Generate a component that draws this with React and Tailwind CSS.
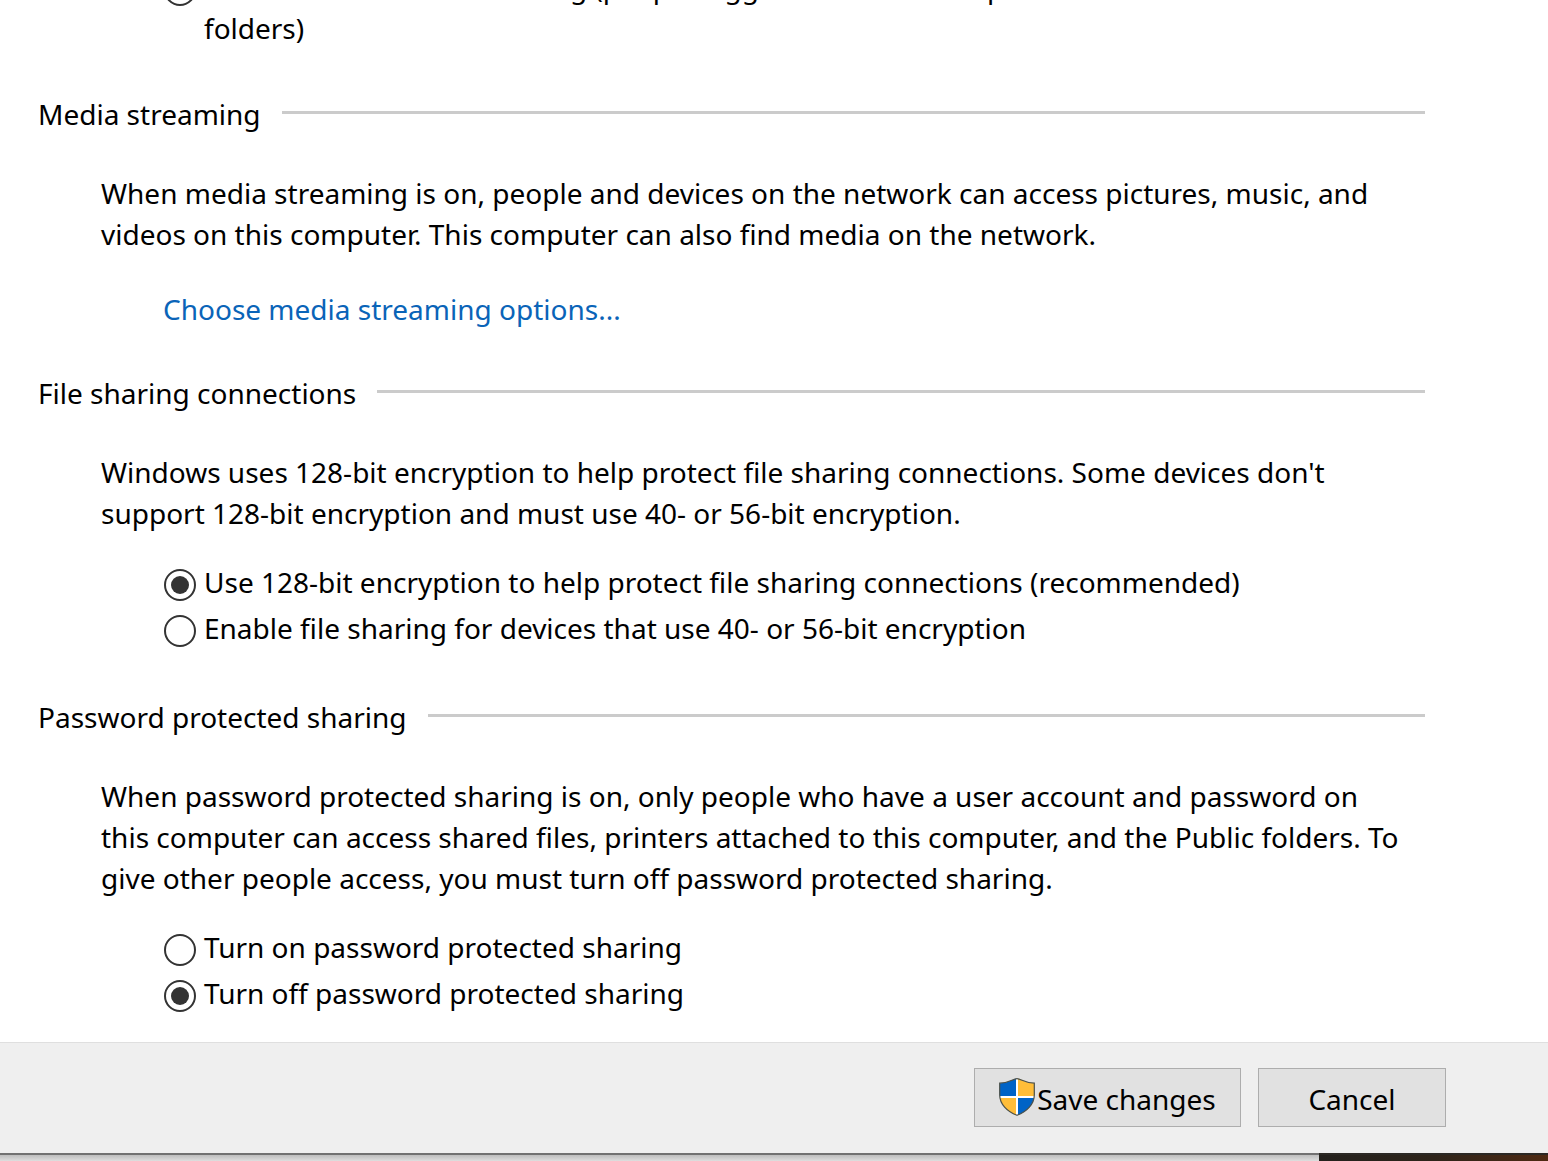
import { useState } from "react";

const Section = ({ title, children }) => (
  <section>
    <div className="flex items-center gap-[21px]">
      <h2 className="whitespace-nowrap">{title}</h2>
      <div className="mb-1 h-[3px] flex-1 bg-[#cbcbcb]" />
    </div>
    {children}
  </section>
);

const Radio = ({ name, checked, onChange, children }) => (
  <label className="flex items-start gap-2 whitespace-nowrap">
    <input
      type="radio"
      name={name}
      checked={checked}
      onChange={onChange}
      className="mt-[7px] grid size-8 shrink-0 appearance-none place-content-center rounded-full border-2 border-[#333333] bg-white before:size-[18px] before:rounded-full checked:before:bg-[#333333]"
    />
    <span>{children}</span>
  </label>
);

const ShieldIcon = () => (
  <svg viewBox="0 0 36 38" className="mb-0.5 h-[38px] w-9 shrink-0" aria-hidden="true">
    <defs>
      <clipPath id="shield">
        <path d="M18 .5C14 .5 10 5.200 .7 5.200V17C.7 26 8 33.500 18 37.500C28 33.500 35.300 26 35.300 17V5.200C26 5.200 22 .5 18 .5Z" />
      </clipPath>
    </defs>
    <g clipPath="url(#shield)">
      <path fill="#0063c6" d="M0 0h18v19H0zM18 19h18v19H18z" />
      <path fill="#ffbd38" d="M18 0h18v19H18zM0 19h18v19H0z" />
      <path fill="#fff" d="M17 0h2v38h-2zM0 18h36v2H0z" />
    </g>
    <path
      fill="none"
      stroke="#4b5049"
      strokeWidth="1.2"
      d="M18 .7C14 .7 10 5.200 .7 5.200V17C.7 26 8 33.500 18 37.300C28 33.500 35.300 26 35.300 17V5.200C26 5.200 22 .7 18 .7Z"
    />
  </svg>
);

const App = () => {
  const [publicSharing, setPublicSharing] = useState("on");
  const [encryption, setEncryption] = useState("128");
  const [password, setPassword] = useState("off");

  return (
    <div className="overflow-hidden bg-white font-['Noto_Sans','Open_Sans',sans-serif] text-[28px] leading-[41px] text-black">
      <main className="-mt-[33px] pr-[123px] pb-7 pl-[38px]">
        {/* Public folder sharing, scrolled mostly out of view */}
        <div className="pl-[126px]">
          <Radio
            name="public"
            checked={publicSharing === "off"}
            onChange={() => setPublicSharing("off")}
          >
            Turn off Public folder sharing (people logged on to this computer can still access these
            <br />
            folders)
          </Radio>
        </div>

        <div className="mt-[45px] flex flex-col gap-[43px]">
          <Section title="Media streaming">
            <p className="mt-[38px] pl-[63px] whitespace-nowrap">
              When media streaming is on, people and devices on the network can access pictures, music, and
              <br />
              videos on this computer. This computer can also find media on the network.
            </p>
            <div className="mt-[34px] pl-[125px]">
              <a href="#media" className="text-[#0a64b8]">
                Choose media streaming options...
              </a>
            </div>
          </Section>

          <Section title="File sharing connections">
            <p className="mt-[38px] pl-[63px] whitespace-nowrap">
              Windows uses 128-bit encryption to help protect file sharing connections. Some devices don't
              <br />
              support 128-bit encryption and must use 40- or 56-bit encryption.
            </p>
            <div className="mt-7 mb-[5px] flex flex-col gap-[5px] pl-[126px]">
              <Radio
                name="encryption"
                checked={encryption === "128"}
                onChange={() => setEncryption("128")}
              >
                Use 128-bit encryption to help protect file sharing connections (recommended)
              </Radio>
              <Radio
                name="encryption"
                checked={encryption === "40"}
                onChange={() => setEncryption("40")}
              >
                Enable file sharing for devices that use 40- or 56-bit encryption
              </Radio>
            </div>
          </Section>

          <Section title="Password protected sharing">
            <p className="mt-[38px] pl-[63px] whitespace-nowrap">
              When password protected sharing is on, only people who have a user account and password on
              <br />
              this computer can access shared files, printers attached to this computer, and the Public folders. To
              <br />
              give other people access, you must turn off password protected sharing.
            </p>
            <div className="mt-7 flex flex-col gap-[5px] pl-[126px]">
              <Radio
                name="password"
                checked={password === "on"}
                onChange={() => setPassword("on")}
              >
                Turn on password protected sharing
              </Radio>
              <Radio
                name="password"
                checked={password === "off"}
                onChange={() => setPassword("off")}
              >
                Turn off password protected sharing
              </Radio>
            </div>
          </Section>
        </div>
      </main>

      <footer className="flex justify-end gap-[17px] border-t border-[#dfdfdf] bg-[#efefef] pt-[25px] pr-[102px] pb-[26px]">
        <button className="flex h-[59px] w-[267px] items-center justify-center border border-[#adadad] bg-[#e1e1e1]">
          <ShieldIcon />
          <span className="ml-0.5 pt-1">Save changes</span>
        </button>
        <button className="h-[59px] w-[188px] border border-[#adadad] bg-[#e1e1e1] pt-1">
          Cancel
        </button>
      </footer>

      {/* Desktop behind the window */}
      <div className="flex h-2">
        <div className="flex-1 border-t-2 border-[#717171] bg-linear-to-b from-[#bdbdbd] to-[#dedede]" />
        <div className="w-[229px] border-t-2 border-[#2b2824] bg-linear-to-r from-[#24211d] via-[#2e241a] to-[#4f2a12]" />
      </div>
    </div>
  );
};

export default App;
